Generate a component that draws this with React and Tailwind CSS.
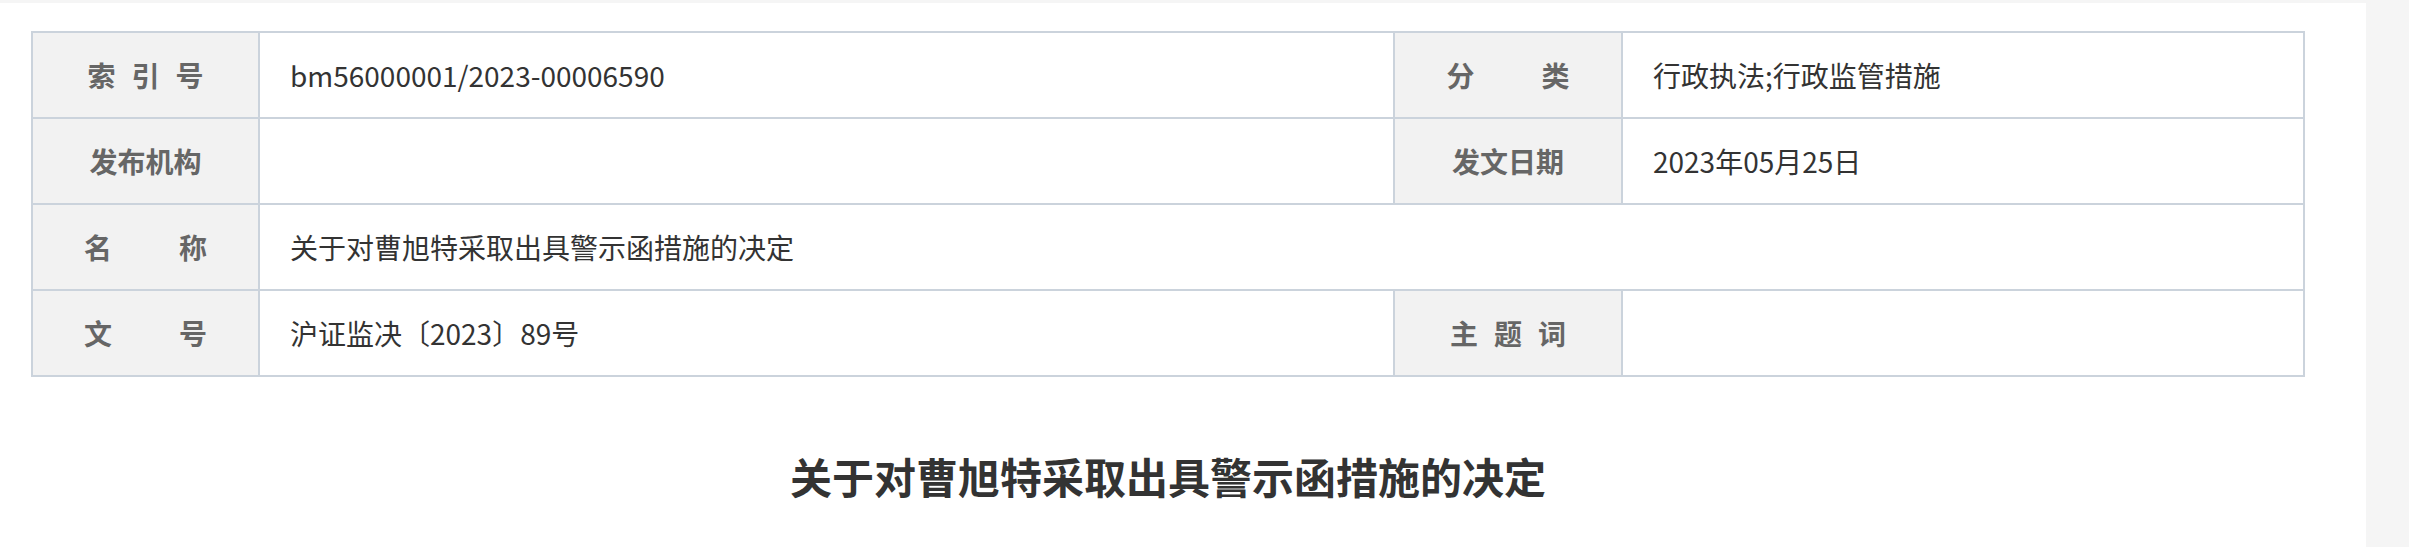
import React from "react";

const FONT = { fontFamily: '"Microsoft YaHei", "Noto Sans CJK SC", "Noto Sans", sans-serif' };

function Label({ chars, gap }) {
  return (
    <div className="bg-[#f2f2f2] flex items-center justify-center text-[28px] font-bold text-[#666]">
      <div className="flex" style={{ columnGap: gap }}>
        {chars.map((c, i) => (
          <span key={i}>{c}</span>
        ))}
      </div>
    </div>
  );
}

function Value({ children, span }) {
  return (
    <div className={`bg-white flex items-center pl-[30px] text-[28px] text-[#333] ${span ? "col-span-3" : ""}`}>
      {children}
    </div>
  );
}

export default function App() {
  return (
    <div className="min-h-screen bg-[#f5f5f5] pt-[3px]" style={FONT}>
      <div className="w-[2366px] bg-white pl-[31px] pt-[28px] pb-[40px]">
        <div className="w-[2274px]">
          <div className="grid grid-cols-[225px_1133px_226px_680px] grid-rows-[84px_84px_84px_84px] gap-[2px] bg-[#cbd3dc] p-[2px]">
            <Label chars={["索", "引", "号"]} gap="16px" />
            <Value>bm56000001/2023-00006590</Value>
            <Label chars={["分", "类"]} gap="67px" />
            <Value>行政执法;行政监管措施</Value>

            <Label chars={["发布机构"]} gap="0px" />
            <Value></Value>
            <Label chars={["发文日期"]} gap="0px" />
            <Value>2023年05月25日</Value>

            <Label chars={["名", "称"]} gap="67px" />
            <Value span>关于对曹旭特采取出具警示函措施的决定</Value>

            <Label chars={["文", "号"]} gap="67px" />
            <Value>沪证监决〔2023〕89号</Value>
            <Label chars={["主", "题", "词"]} gap="16px" />
            <Value></Value>
          </div>

          <h1 className="mt-[67px] text-center text-[42px] leading-[63px] font-bold text-[#333]">
            关于对曹旭特采取出具警示函措施的决定
          </h1>
        </div>
      </div>
    </div>
  );
}
